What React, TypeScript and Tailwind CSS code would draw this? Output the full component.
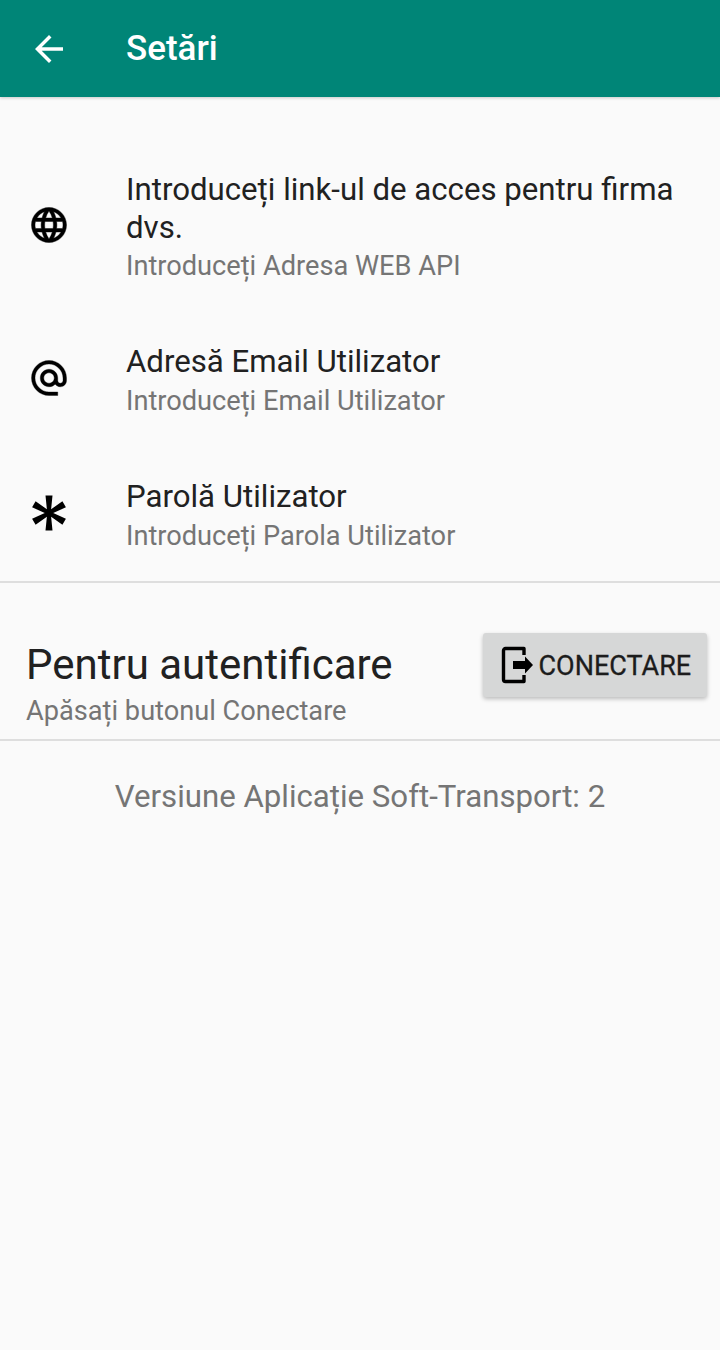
export default function App() {
  const Row = ({ icon, title, sub, lh = "leading-[38px]" }: { icon: React.ReactNode; title: string; sub: string; lh?: string }) => (
    <div className="flex items-center">
      <div className="w-[126px] shrink-0 pl-[28px] mb-[8px]">{icon}</div>
      <div className="flex-1 pr-[28px]">
        <div className={`text-[31.2px] text-[#212121] ${lh}`}>{title}</div>
        <div className="text-[27.2px] leading-[39px] pt-[1px] text-[#757575]">{sub}</div>
      </div>
    </div>
  );
  return (
    <div className="w-[720px] h-[1350px] bg-[#fafafa] font-['Roboto',sans-serif] overflow-hidden">
      <header className="h-[97px] bg-[#008577] flex items-center shadow-[0_1px_3px_rgba(0,0,0,0.2)]">
        <div className="w-[126px] pl-[28px]">
          <svg width="42" height="42" viewBox="0 0 24 24" fill="#fff"><path d="M20 11H7.83l5.59-5.59L12 4l-8 8 8 8 1.41-1.41L7.83 13H20v-2z" /></svg>
        </div>
        <h1 className="text-[35px] font-medium text-white pt-[2px]">Setări</h1>
      </header>
      <div className="pt-[74px] flex flex-col gap-[57px] pb-[25px] border-b-2 border-[#dedede]">
        <Row lh="leading-[37.5px]" title="Introduceți link-ul de acces pentru firma dvs." sub="Introduceți Adresa WEB API"
          icon={<svg width="42" height="42" viewBox="0 0 24 24" fill="#000" stroke="#000" strokeWidth="0.25"><path d="M11.99 2C6.47 2 2 6.48 2 12s4.47 10 9.99 10C17.52 22 22 17.52 22 12S17.52 2 11.99 2zm6.93 6h-2.95c-.32-1.25-.78-2.45-1.38-3.56 1.84.63 3.37 1.91 4.33 3.56zM12 4.04c.83 1.2 1.48 2.53 1.91 3.96h-3.82c.43-1.43 1.08-2.76 1.91-3.96zM4.26 14C4.1 13.36 4 12.69 4 12s.1-1.36.26-2h3.38c-.08.66-.14 1.32-.14 2 0 .68.06 1.34.14 2H4.26zm.82 2h2.95c.32 1.25.78 2.45 1.38 3.56-1.84-.63-3.37-1.9-4.33-3.56zm2.95-8H5.08c.96-1.66 2.49-2.93 4.33-3.56C8.81 5.55 8.35 6.75 8.03 8zM12 19.96c-.83-1.2-1.48-2.53-1.91-3.96h3.82c-.43 1.43-1.08 2.76-1.91 3.96zM14.34 14H9.66c-.09-.66-.16-1.32-.16-2 0-.68.07-1.35.16-2h4.68c.09.65.16 1.32.16 2 0 .68-.07 1.34-.16 2zm.25 5.56c.6-1.11 1.06-2.31 1.38-3.56h2.95c-.96 1.65-2.49 2.93-4.33 3.56zM16.36 14c.08-.66.14-1.32.14-2 0-.68-.06-1.34-.14-2h3.38c.16.64.26 1.31.26 2s-.1 1.36-.26 2h-3.38z" /></svg>} />
        <Row title="Adresă Email Utilizator" sub="Introduceți Email Utilizator"
          icon={<svg width="42" height="42" viewBox="0 0 24 24" fill="#000" stroke="#000" strokeWidth="0.2"><path d="M12 2C6.48 2 2 6.48 2 12s4.48 10 10 10h5v-2h-5c-4.34 0-8-3.66-8-8s3.66-8 8-8 8 3.66 8 8v1.43c0 .79-.71 1.57-1.5 1.57s-1.5-.78-1.5-1.57V12c0-2.76-2.24-5-5-5s-5 2.24-5 5 2.24 5 5 5c1.38 0 2.64-.56 3.54-1.47.65.89 1.77 1.47 2.96 1.47 1.97 0 3.5-1.6 3.5-3.57V12c0-5.52-4.48-10-10-10zm0 13c-1.66 0-3-1.34-3-3s1.34-3 3-3 3 1.34 3 3-1.34 3-3 3z" /></svg>} />
        <Row title="Parolă Utilizator" sub="Introduceți Parola Utilizator"
          icon={<svg width="42" height="42" viewBox="0 0 24 24" fill="#000"><path d="M10,2H14L13.21,9.91L19.66,5.27L21.66,8.73L14.42,12L21.66,15.27L19.66,18.73L13.21,14.09L14,22H10L10.79,14.09L4.34,18.73L2.34,15.27L9.58,12L2.34,8.73L4.34,5.27L10.79,9.91L10,2Z" /></svg>} />
      </div>
      <div className="h-[158px] border-b-2 border-[#dedede] pl-[26px] pr-[13.5px] flex items-start justify-between">
        <div className="pt-[57px]">
          <div className="text-[42px] leading-[49px] text-[#212121]">Pentru autentificare</div>
          <div className="text-[27.2px] leading-[39px] pt-[3px] text-[#757575]">Apăsați butonul Conectare</div>
        </div>
        <button className="mt-[50px] w-[224px] h-[64px] bg-[#d6d7d7] rounded-[3px] shadow-[0_2px_4px_rgba(0,0,0,0.25)] flex items-center pl-[16px]">
          <svg width="40" height="40" viewBox="0 0 40 40" className="shrink-0">
            <path d="M25 10V3.5H6.5a2 2 0 0 0-2 2v29a2 2 0 0 0 2 2H25V30" fill="none" stroke="#000" strokeWidth="3.4" strokeLinejoin="round" />
            <path d="M14 16h12V11.5L34 20l-8 8.5V24H14z" fill="#000" />
          </svg>
          <span className="text-[27px] leading-[40px] pt-[1px] text-[#1c1c1c] [-webkit-text-stroke:0.3px_#1c1c1c]">CONECTARE</span>
        </button>
      </div>
      <div className="pt-[36px] text-center text-[31.2px] leading-[40px] text-[#757575]">Versiune Aplicație Soft-Transport: 2</div>
    </div>
  );
}
